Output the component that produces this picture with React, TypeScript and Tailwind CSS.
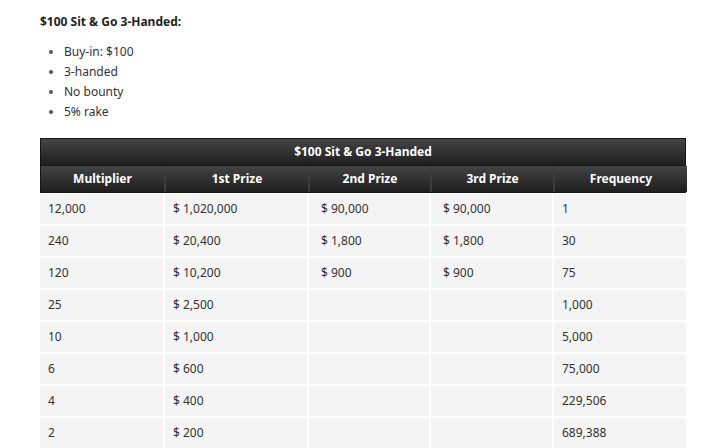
const rows = [
  ['12,000', '$ 1,020,000', '$ 90,000', '$ 90,000', '1'],
  ['240', '$ 20,400', '$ 1,800', '$ 1,800', '30'],
  ['120', '$ 10,200', '$ 900', '$ 900', '75'],
  ['25', '$ 2,500', '', '', '1,000'],
  ['10', '$ 1,000', '', '', '5,000'],
  ['6', '$ 600', '', '', '75,000'],
  ['4', '$ 400', '', '', '229,506'],
  ['2', '$ 200', '', '', '689,388'],
];

const heads = ['Multiplier', '1st Prize', '2nd Prize', '3rd Prize', 'Frequency'];

const cols = 'grid grid-cols-[123px_142px_120px_121px_132px] gap-[2px]';

export default function App() {
  return (
    <div className="w-[719px] h-[448px] overflow-hidden bg-white text-[#333] text-[12px] font-['Noto_Sans',sans-serif]">
      <div className="pl-[40px] pt-[12px]">
        <h3 className="font-bold text-[12px] leading-[20px] text-[#222]">$100 Sit &amp; Go 3-Handed:</h3>
        <ul className="mt-[10px] pl-[24px] list-disc marker:text-[#555]">
          <li className="leading-[20px]">Buy-in: $100</li>
          <li className="leading-[20px]">3-handed</li>
          <li className="leading-[20px]">No bounty</li>
          <li className="leading-[20px]">5% rake</li>
        </ul>

        <div className="mt-[16px] w-[646px]">
          <div className="h-[28px] flex items-center justify-center border border-[#151515] bg-gradient-to-b from-[#454545] to-[#1f1f1f] text-white font-bold">
            $100 Sit &amp; Go 3-Handed
          </div>
          <div className={`${cols} bg-[#3c3c3c] border-x border-b border-[#151515]`}>
            {heads.map((h) => (
              <div
                key={h}
                className="h-[26px] flex items-center justify-center bg-gradient-to-b from-[#444] to-[#1e1e1e] text-white font-bold"
              >
                {h}
              </div>
            ))}
          </div>
          <div className={`${cols} mt-[1px]`}>
            {rows.map((r, i) =>
              r.map((c, j) => (
                <div
                  key={`${i}-${j}`}
                  className={j === 2 || j === 3 ? 'h-[30px] flex items-center pl-[12px] bg-[#f4f4f4]' : 'h-[30px] flex items-center pl-[8px] bg-[#f4f4f4]'}
                >
                  {c}
                </div>
              )),
            )}
          </div>
        </div>
      </div>
    </div>
  );
}
